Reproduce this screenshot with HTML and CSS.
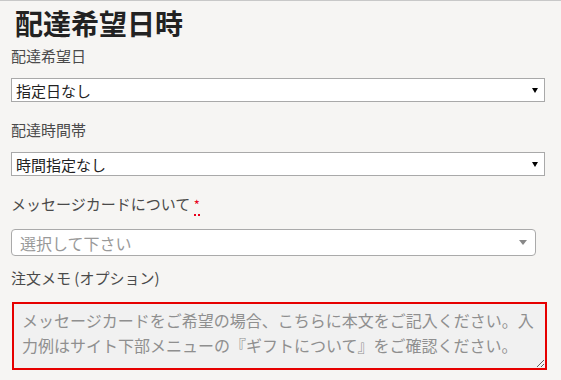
FILE: index.html
```html
<!DOCTYPE html>
<html lang="ja">
<head>
    <meta charset="UTF-8">
    <meta name="viewport" content="width=device-width, initial-scale=1.0">
    <title>配達希望日時</title>
    <link rel="stylesheet" href="styles.css">
</head>
<body>
    <div class="checkout-box">
        <h3 class="box-title">配達希望日時</h3>

        <p class="form-row">
            <label class="form-label" for="delivery_date">配達希望日</label>
            <span class="select-wrap">
                <select id="delivery_date" class="form-select">
                    <option>指定日なし</option>
                </select>
            </span>
        </p>

        <p class="form-row">
            <label class="form-label" for="delivery_time">配達時間帯</label>
            <span class="select-wrap">
                <select id="delivery_time" class="form-select">
                    <option>時間指定なし</option>
                </select>
            </span>
        </p>

        <p class="form-row">
            <label class="form-label" for="message_card">メッセージカードについて <abbr class="required" title="必須">*</abbr></label>
            <span class="select2">
                <span class="select2-text">選択して下さい</span>
                <span class="select2-arrow"></span>
            </span>
        </p>

        <p class="form-row">
            <label class="form-label" for="order_comments">注文メモ (オプション)</label>
            <textarea id="order_comments" class="form-textarea" placeholder="メッセージカードをご希望の場合、こちらに本文をご記入ください。入力例はサイト下部メニューの『ギフトについて』をご確認ください。"></textarea>
        </p>
    </div>
</body>
</html>
```

FILE: styles.css
```css
body {
    margin: 0;
    background: #f6f5f3;
    border-top: 1px solid #c8c8c8;
    font-family: "Noto Sans CJK JP", "Noto Sans", sans-serif;
    color: #333;
}
.checkout-box {
    padding: 5px 0 0 11px;
    width: 536px;
}
.box-title {
    margin: 0 0 5px 4px;
    font-size: 28px;
    line-height: 34px;
    font-weight: 700;
    color: #222;
}
.form-row {
    margin: 0;
    display: flex;
    flex-direction: column;
}
.form-label {
    display: block;
    font-size: 15px;
    line-height: 22px;
    color: #4a4a4a;
    margin-bottom: 11px;
}
.select-wrap {
    position: relative;
    display: block;
    width: 534px;
    margin-bottom: 17px;
}
.select-wrap::after {
    content: "";
    position: absolute;
    right: 7px;
    top: 10px;
    border-left: 3px solid transparent;
    border-right: 3px solid transparent;
    border-top: 5px solid #000;
}
.form-select {
    -webkit-appearance: none;
    appearance: none;
    display: block;
    width: 100%;
    height: 24px;
    margin: 0;
    padding: 0 20px 0 4px;
    border: 1px solid #a9a9a9;
    border-radius: 0;
    background: #fff;
    font-family: inherit;
    font-size: 15px;
    color: #222;
}
.required {
    color: #e8001c;
    font-size: 13px;
    text-decoration: none;
    border-bottom: 2px dotted #e8001c;
}
.select2 {
    display: flex;
    align-items: center;
    justify-content: space-between;
    width: 525px;
    height: 27px;
    box-sizing: border-box;
    padding: 0 8px 0 8px;
    margin-top: 2px;
    margin-bottom: 11px;
    border: 1px solid #aaa;
    border-radius: 4px;
    background: #fff;
}
.select2-text {
    font-size: 16px;
    color: #999;
}
.select2-arrow {
    border-left: 4px solid transparent;
    border-right: 4px solid transparent;
    border-top: 5px solid #888;
}
.form-textarea {
    display: block;
    width: 535px;
    height: 68px;
    box-sizing: border-box;
    margin: 2px 0 0 1px;
    padding: 4px 8px;
    border: 2px solid #e60000;
    background: #f1f1f1;
    font-family: inherit;
    font-size: 16px;
    line-height: 25px;
    color: #333;
}
.form-textarea::placeholder {
    color: #8f8f8f;
}
```
